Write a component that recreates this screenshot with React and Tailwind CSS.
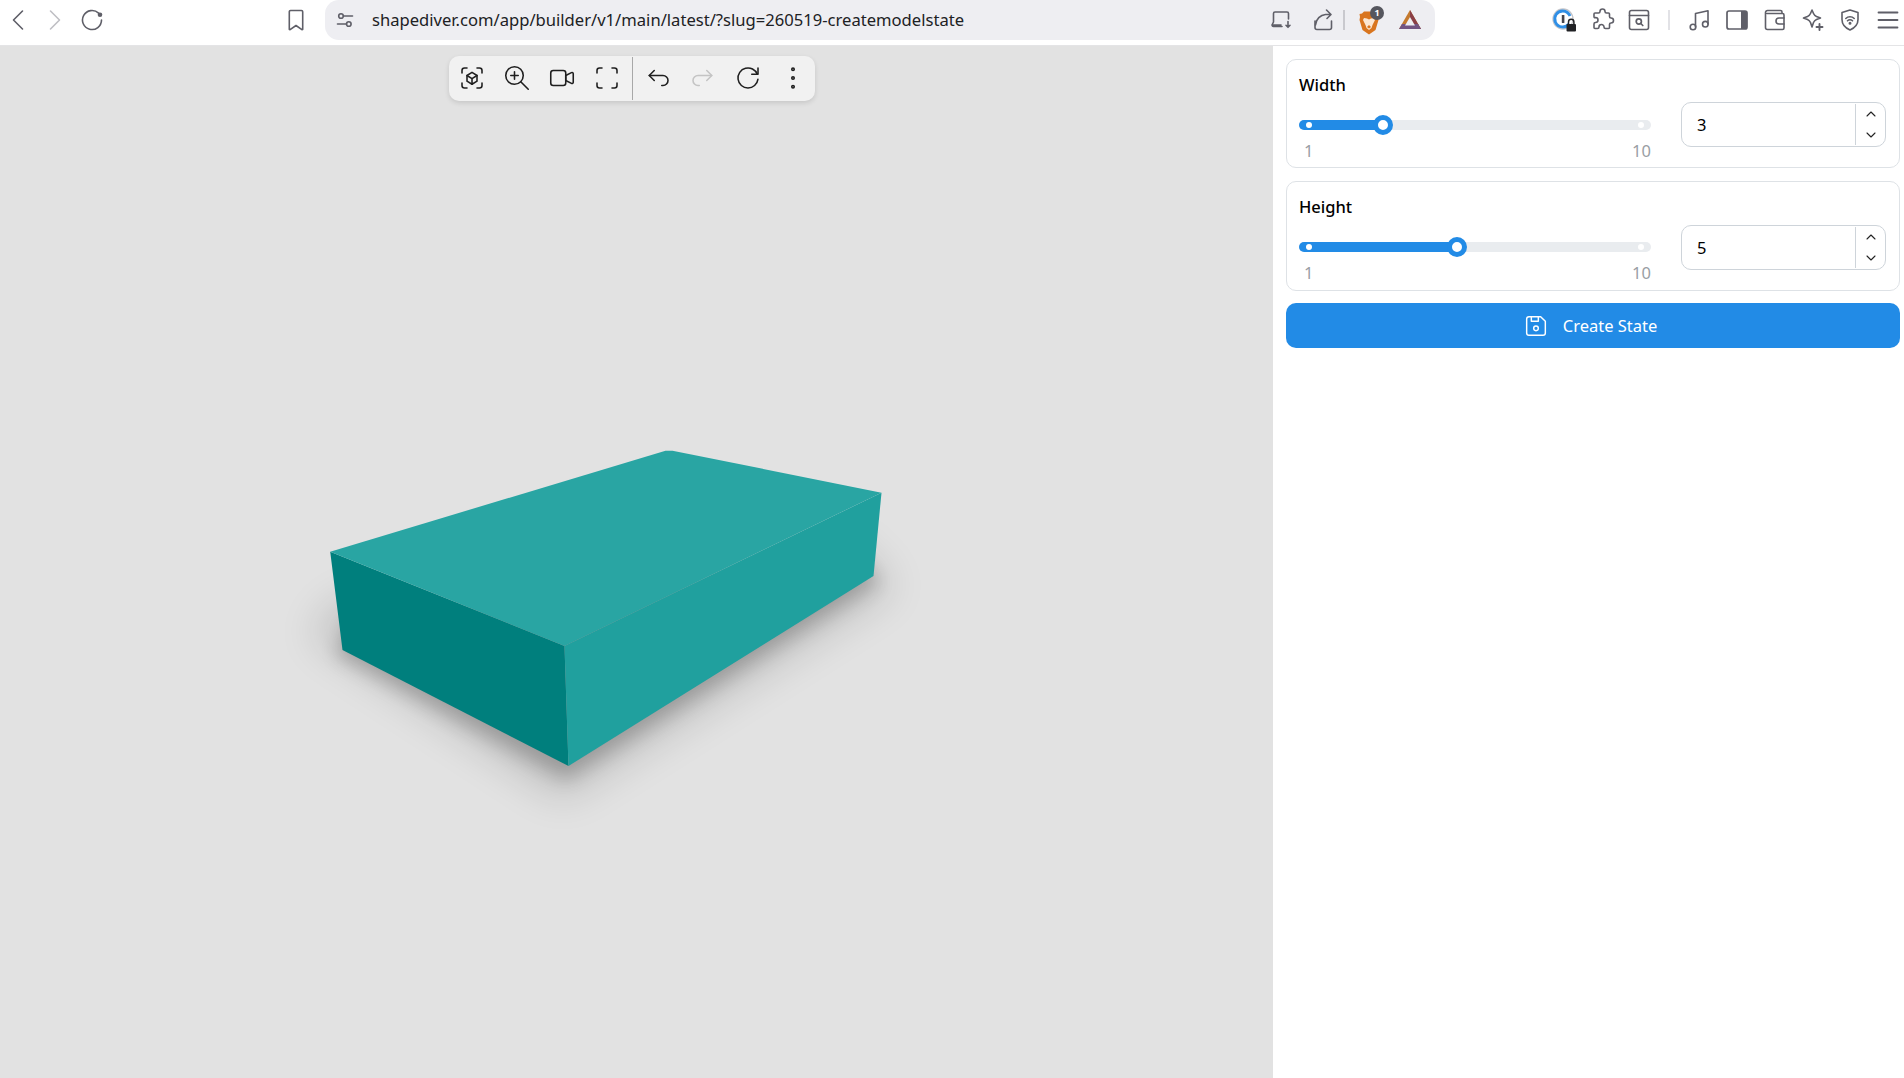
import React from "react";
import { TbAugmentedReality, TbZoomIn, TbVideo, TbMaximize, TbArrowBackUp, TbArrowForwardUp, TbReload, TbDotsVertical, TbDeviceFloppy, TbChevronUp, TbChevronDown } from "react-icons/tb";

const G = "#5f5f68";

function Ico({ w = 24, h = 24, vb = "0 0 24 24", children, className = "" }) {
  return (
    <svg width={w} height={h} viewBox={vb} fill="none" stroke={G} strokeWidth="1.6" strokeLinecap="round" strokeLinejoin="round" className={"shrink-0 " + className}>
      {children}
    </svg>
  );
}

function LionIcon() {
  return (
    <div className="relative w-[24px] h-[30px] shrink-0">
      <svg width="20" height="24" viewBox="0 0 20 24" className="absolute left-0 top-[6px]">
        <path d="M5 0.5h10l2 2 2.5 0.5-0.5 3 0.5 3-3 10-6.5 4.500-6.500-4.500-3-10 0.500-3-0.500-3 2.500-0.500z" fill="#d9751f" />
        <path d="M5 7l3 0.500 2 1 2-1 3-0.500 1 2-2.500 5-1 3-2.500 2-2.500-2-1-3-2.500-5z" fill="#fbe7d3" />
        <path d="M8 16l2 1.500 2-1.500-2-2z" fill="#d9751f" />
      </svg>
      <div className="absolute left-[11px] top-[1px] w-[14px] h-[14px] rounded-full bg-[#55565e] text-white text-[9px] font-bold leading-[14px] text-center">1</div>
    </div>
  );
}

function TopBar() {
  return (
    <div className="h-[46px] shrink-0 bg-white border-b border-[#e4e4e6] flex items-start">
      <div className="h-[40px] flex items-center ml-[11px]">
        <Ico w={14} h={22} vb="0 0 14 22"><path d="M11.500 2L2.500 11l9 9" /></Ico>
        <svg width="14" height="22" viewBox="0 0 14 22" fill="none" stroke="#bfbfc4" strokeWidth="1.6" strokeLinecap="round" strokeLinejoin="round" className="ml-[23px] shrink-0"><path d="M2.500 2l9 9-9 9" /></svg>
        <Ico w={24} h={24} className="ml-[19px]">
          <path d="M20.500 12a9.500 9.500 0 1 1-2.900-6.800" />
          <circle cx="19" cy="6.800" r="2.300" fill={G} stroke="none" />
        </Ico>
        <Ico w={18} h={24} vb="0 0 18 24" className="ml-[182px]">
          <path d="M3.500 2.500h11a1.200 1.200 0 0 1 1.200 1.200V21.200a.5.5 0 0 1-.8.4L9 17.500l-5.900 4.100a.5.5 0 0 1-.8-.4V3.700a1.200 1.200 0 0 1 1.200-1.200z" />
        </Ico>
      </div>
      <div className="ml-[20px] w-[1110px] h-[40px] rounded-[14px] bg-[#eeeef2] flex items-center pl-[11px]">
        <Ico w={18} h={18} vb="0 0 18 18">
          <circle cx="5" cy="5" r="2.300" /><path d="M7.500 5h9" />
          <circle cx="12.800" cy="13" r="2.300" /><path d="M1.500 13h9" />
        </Ico>
        <span className="ml-[18px] text-[16.6px] text-[#202124] whitespace-nowrap">shapediver.com/app/builder/v1/main/latest/?slug=260519-createmodelstate</span>
        <div className="flex-1" />
        <Ico w={24} h={22} vb="0 0 24 22">
          <path d="M12 16H4.500M3 16l1.500-3V4.500a1.500 1.500 0 0 1 1.500-1.500h12a1.500 1.500 0 0 1 1.500 1.500V10M3 16a2 2 0 0 0 1.500 1.500H13" />
          <path d="M19 12.500v5.500M17 16.300l2 2 2-2" />
        </Ico>
        <Ico w={24} h={24} className="ml-[18px]">
          <path d="M20.500 13v6.500a2 2 0 0 1-2 2H6a2 2 0 0 1-2-2V13" />
          <path d="M4.500 17c.5-6 5-10 10-10.500h5M15.500 2l4.500 4.500-4 4" />
        </Ico>
        <div className="ml-[8px] w-[2px] h-[20px] bg-[#c9c9ce]" />
        <div className="ml-[14px]"><LionIcon /></div>
        <svg width="24" height="22" viewBox="0 0 24 22" className="ml-[15px] shrink-0">
          <path d="M12 1L23 20H1z" fill="#c4792f" />
          <path d="M12 1L23 20H12z" fill="#8a3f46" />
          <path d="M1 20l3-5h16l3 5z" fill="#725482" />
          <path d="M12 8l5 8.500H7z" fill="#eeeef2" />
        </svg>
        <div className="w-[13px] shrink-0" />
      </div>
      <div className="h-[40px] flex items-center ml-[117px]">
        <svg width="26" height="26" viewBox="0 0 26 26" fill="none" className="shrink-0">
          <circle cx="11" cy="12" r="10" stroke="#c4c4c8" strokeWidth="1.300" />
          <path d="M11 4a8 8 0 1 0 6 13" stroke="#2f8fe6" strokeWidth="2.800" />
          <path d="M11 4a8 8 0 0 1 7 5" stroke="#2f8fe6" strokeWidth="2.800" />
          <rect x="9.800" y="8" width="2.600" height="8" rx="0.600" fill="#44444c" />
          <rect x="14.500" y="17" width="9.500" height="7.500" rx="1" fill="#202124" />
          <path d="M16.500 17v-2a2.700 2.700 0 0 1 5.400 0v2" stroke="#202124" strokeWidth="1.500" />
        </svg>
        <Ico w={24} h={24} className="ml-[13px]">
          <path d="M9 3.500a2.500 2.500 0 0 1 5 0c0 1 .5 1.500 1.500 1.500h2a1 1 0 0 1 1 1v2.500c0 1 .5 1.500 1.500 1.500a2.500 2.500 0 0 1 0 5c-1 0-1.500.5-1.500 1.500v3a1 1 0 0 1-1 1h-3c-1 0-1.500-.5-1.500-1.500a2.500 2.500 0 0 0-5 0c0 1-.5 1.500-1.500 1.500H4a1 1 0 0 1-1-1v-3.500c0-1 .5-1.500 1.500-1.500a2.500 2.500 0 0 0 0-5C3.500 10 3 9.500 3 8.500V6a1 1 0 0 1 1-1h3.500C8.500 5 9 4.500 9 3.500z" />
        </Ico>
        <Ico w={22} h={22} vb="0 0 22 22" className="ml-[13px]">
          <rect x="1.500" y="1.500" width="19" height="19" rx="2" />
          <path d="M1.500 6.500h19" />
          <circle cx="10.800" cy="12.500" r="2.600" strokeWidth="1.700" />
          <path d="M12.800 14.500l2 2" strokeWidth="1.700" />
        </Ico>
        <div className="ml-[18px] w-[2px] h-[20px] bg-[#e2e2e6]" />
        <Ico w={24} h={24} className="ml-[18px]">
          <path d="M7.500 19V5.500L20 2.800V16" />
          <circle cx="5" cy="19" r="2.800" />
          <circle cx="17.300" cy="16.200" r="2.800" />
        </Ico>
        <svg width="22" height="20" viewBox="0 0 22 20" fill="none" className="ml-[14px] shrink-0">
          <rect x="1" y="1" width="20" height="18" rx="2" stroke={G} strokeWidth="1.700" />
          <path d="M15 1h4a2 2 0 0 1 2 2v14a2 2 0 0 1-2 2h-4z" fill={G} />
        </svg>
        <Ico w={22} h={22} vb="0 0 22 22" className="ml-[16px]">
          <path d="M18 4.500V3a1.500 1.500 0 0 0-1.500-1.500H3.500A2 2 0 0 0 1.500 3.500v15A2 2 0 0 0 3.500 20.500h15a1.500 1.500 0 0 0 1.500-1.500V6a1.500 1.500 0 0 0-1.500-1.500H3" />
          <path d="M20 9h-5a2 2 0 0 0 0 6h5" />
        </Ico>
        <Ico w={22} h={24} vb="0 0 22 24" className="ml-[16px]">
          <path d="M10 2l1.500 3.500a6 6 0 0 0 3 3L18.500 10l-4 1.500a6 6 0 0 0-3 3L10 19l-1.500-4.500a6 6 0 0 0-3-3L1.500 10l4-1.500a6 6 0 0 0 3-3z" />
          <path d="M17.500 16v6M14.500 19h6" strokeWidth="1.900" />
        </Ico>
        <Ico w={22} h={24} vb="0 0 22 24" className="ml-[15px]">
          <path d="M11 2l8 2.500v7c0 5-3.500 8.500-8 10.500-4.500-2-8-5.500-8-10.500v-7z" />
          <path d="M6.800 10.500a6 6 0 0 1 8.400 0M8.500 12.800a3.500 3.500 0 0 1 5 0" />
          <circle cx="11" cy="15.300" r="0.700" fill={G} />
        </Ico>
        <Ico w={22} h={20} vb="0 0 22 20" className="ml-[16px]">
          <path d="M1.500 2.500h19M1.500 10h19M1.500 17.500h19" strokeWidth="1.800" />
        </Ico>
      </div>
    </div>
  );
}

function Toolbar() {
  const s = { size: 30, strokeWidth: 1.25, color: "#1f1f1f" };
  const Slot = ({ children }) => <div className="w-[45px] h-[43px] shrink-0 flex items-center justify-center">{children}</div>;
  return (
    <div className="absolute left-[448.5px] top-[10px] w-[366px] h-[45px] pl-[1px] rounded-[10px] bg-[#f1f1f1] shadow-[0_2px_5px_rgba(0,0,0,0.12)] flex items-start">
      <Slot><TbAugmentedReality {...s} /></Slot>
      <Slot><TbZoomIn {...s} /></Slot>
      <Slot><TbVideo {...s} /></Slot>
      <Slot><TbMaximize {...s} /></Slot>
      <div className="w-[6px] h-[45px] shrink-0 py-[1px] flex justify-center"><div className="w-px h-full bg-[#a8a8a8]" /></div>
      <Slot><TbArrowBackUp {...s} /></Slot>
      <Slot><TbArrowForwardUp {...s} color="#c4c4c4" /></Slot>
      <Slot><TbReload {...s} /></Slot>
      <Slot><TbDotsVertical {...s} /></Slot>
    </div>
  );
}

function Scene() {
  return (
    <svg viewBox="0 46 1272 1032" className="absolute inset-0 w-full h-full">
      <defs>
        <filter id="b1" x="-30%" y="-30%" width="160%" height="160%"><feGaussianBlur stdDeviation="20" /></filter>
        <filter id="b2" x="-30%" y="-30%" width="160%" height="160%"><feGaussianBlur stdDeviation="9" /></filter>
      </defs>
      <polygon points="310,635 562,800 895,588 850,540 340,600" fill="#000" opacity="0.14" filter="url(#b1)" />
      <polygon points="335,655 566,780 880,582 860,560 350,620" fill="#000" opacity="0.2" filter="url(#b2)" />
      <polygon points="329.700,551.700 564,646 568,766 342,650" fill="#007f7d" />
      <polygon points="564,646 881,492.700 873,576 568,766" fill="#20a09e" />
      <polygon points="329.700,551.700 665,450.700 672,450.700 881,492.700 564,646" fill="#29a5a3" />
    </svg>
  );
}

function Slider({ fill, thumb, min, max }) {
  return (
    <div className="w-[352px] shrink-0 pt-[18px]">
      <div className="relative h-[10px] rounded-full bg-[#e9ecef]">
        <div className={"absolute left-0 top-0 h-full rounded-l-full bg-[#228be6] " + fill} />
        <div className="absolute left-[7px] top-[2px] w-[6px] h-[6px] rounded-full bg-white" />
        <div className="absolute right-[7px] top-[2px] w-[6px] h-[6px] rounded-full bg-white" />
        <div className={"absolute top-[-5px] w-[20px] h-[20px] rounded-full bg-white border-[5px] border-[#228be6] " + thumb} />
      </div>
      <div className="flex justify-between mt-[9px] h-[24px] text-[16.5px] leading-[24px] text-[#999ea4]">
        <span className="pl-[5px]">{min}</span>
        <span>{max}</span>
      </div>
    </div>
  );
}

function Stepper({ value, className = "" }) {
  return (
    <div className={"ml-[30px] w-[205px] h-[45px] rounded-[10px] border border-[#ced4da] bg-white flex items-stretch " + className}>
      <div className="flex-1 pl-[15px] text-[16.5px] leading-[44px] text-black">{value}</div>
      <div className="w-[30px] my-[1px] border-l border-[#ced4da] flex flex-col items-center justify-between py-[2px]">
        <TbChevronUp size={16} strokeWidth={1.6} color="#222" />
        <TbChevronDown size={16} strokeWidth={1.6} color="#222" />
      </div>
    </div>
  );
}

function Card({ title, value, fill, thumb, h, stepper = "", className = "" }) {
  return (
    <div className={"rounded-[10px] border border-[#dee2e6] px-[12px] pt-[13px] " + h + " " + className}>
      <div className="text-[16.5px] leading-[24px] font-medium text-black">{title}</div>
      <div className="flex items-start mt-[5px]">
        <Slider fill={fill} thumb={thumb} min="1" max="10" />
        <Stepper value={value} className={stepper} />
      </div>
    </div>
  );
}

export default function App() {
  return (
    <div className="h-screen flex flex-col overflow-hidden bg-white font-['Noto_Sans',sans-serif]">
      <TopBar />
      <div className="flex-1 flex min-h-0">
        <div className="relative flex-1 bg-[#e2e2e2] overflow-hidden">
          <Scene />
          <Toolbar />
        </div>
        <div className="w-[631px] shrink-0 bg-white pl-[13px] pr-[4px] pt-[13px]">
          <Card title="Width" value="3" fill="w-[84px]" thumb="left-[74px]" h="h-[109px]" />
          <Card title="Height" value="5" fill="w-[158px]" thumb="left-[148px]" h="h-[110px]" stepper="mt-[1px]" className="mt-[13px]" />
          <button className="mt-[12px] w-full h-[45px] rounded-[10px] bg-[#228be6] text-white text-[16.5px] pt-[1px] pr-[7px] flex items-center justify-center gap-[13px]">
            <TbDeviceFloppy size={28} strokeWidth={1.25} />
            <span>Create State</span>
          </button>
        </div>
      </div>
    </div>
  );
}
